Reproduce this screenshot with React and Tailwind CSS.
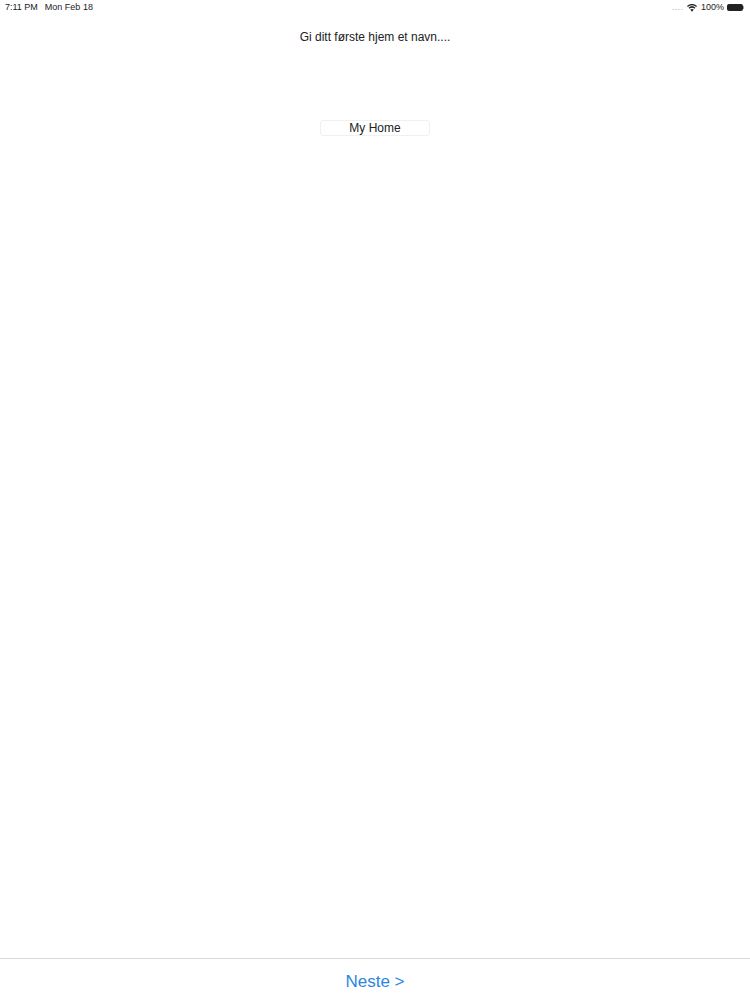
const WifiIcon = () => (
  <svg width="10" height="8" viewBox="0 0 11 8" className="mr-[4px]">
    <path d="M5.5 8 L3.6 5.8 A2.9 2.9 0 0 1 7.4 5.8 Z" fill="#222" />
    <path d="M2.8 4.9 L1.7 3.6 A5.6 5.6 0 0 1 9.3 3.6 L8.2 4.9 A4 4 0 0 0 2.8 4.9 Z" fill="#222" />
    <path d="M0.9 2.8 L0 1.7 A8 8 0 0 1 11 1.7 L10.1 2.8 A6.6 6.6 0 0 0 0.9 2.8 Z" fill="#222" />
  </svg>
)

const StatusBar = () => (
  <div className="h-[15px] flex items-center justify-between pl-[5px] pr-[6px] text-[9px] leading-none text-[#222]">
    <div className="flex gap-[7px]">
      <span>7:11 PM</span>
      <span>Mon Feb 18</span>
    </div>
    <div className="flex items-center">
      <div className="flex gap-[1px] mr-[4px] mt-[3px]">
        <span className="w-[2px] h-[1px] bg-gray-300"></span>
        <span className="w-[2px] h-[1px] bg-gray-300"></span>
        <span className="w-[2px] h-[1px] bg-gray-300"></span>
        <span className="w-[2px] h-[1px] bg-gray-300"></span>
      </div>
      <WifiIcon />
      <span className="mr-[3px]">100%</span>
      <div className="w-[16px] h-[7px] bg-[#222] rounded-[2px]"></div>
      <div className="w-[1px] h-[3px] bg-gray-400"></div>
    </div>
  </div>
)

export default function App() {
  return (
    <div className="w-[750px] h-[1000px] bg-white flex flex-col font-['Liberation_Sans',Arial,sans-serif]">
      <StatusBar />
      <div className="flex-1 flex flex-col items-center">
        <p className="mt-[15px] text-[12px] leading-[15px] text-[#222]">Gi ditt første hjem et navn....</p>
        <div className="mt-[75px] w-[110px] h-[16px] flex items-center justify-center border border-[#f0f0f0] rounded-[3px] text-[12px] text-[#222]">
          My Home
        </div>
      </div>
      <div className="h-[42px] pt-[5px] border-t border-[#d8d8d8] flex items-center justify-center text-[17px] text-[#2a85e0]">
        Neste &gt;
      </div>
    </div>
  )
}
